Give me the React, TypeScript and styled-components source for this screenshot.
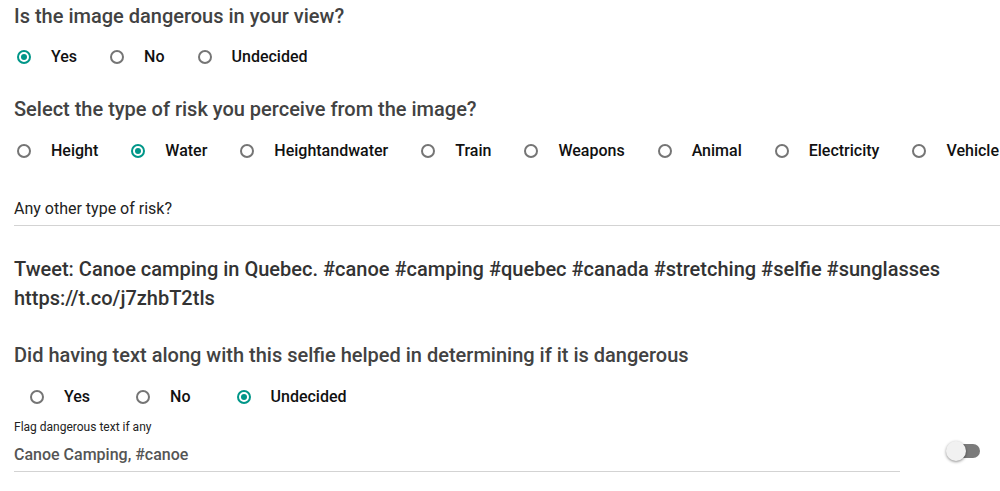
import React from "react";
import styled, { createGlobalStyle } from "styled-components";

const Global = createGlobalStyle`
  html, body { margin: 0; padding: 0; background: #fff; }
  body { font-family: Roboto, "Noto Sans", Arial, sans-serif; overflow: hidden; }
`;

const Page = styled.div`
  padding-left: 14px;
  padding-top: 1px;
  width: 986px;
`;

const Heading = styled.div<{ $mt: number }>`
  margin-top: ${(p) => p.$mt}px;
  font-size: 20px;
  font-weight: 500;
  line-height: 30px;
  color: #424242;
  white-space: nowrap;
`;

const RadioRow = styled.div<{ $mt: number; $indent?: number; $gap?: number }>`
  display: flex;
  align-items: center;
  height: 30px;
  margin-top: ${(p) => p.$mt}px;
  padding-left: ${(p) => (p.$indent ?? 0) + 3}px;
  gap: ${(p) => p.$gap ?? 33}px;
  white-space: nowrap;
`;

const Option = styled.label`
  display: flex;
  align-items: center;
  gap: 20px;
  cursor: pointer;
`;

const Circle = styled.span<{ $on: boolean }>`
  box-sizing: border-box;
  width: 14px;
  height: 14px;
  border-radius: 50%;
  border: 2px solid ${(p) => (p.$on ? "#009688" : "#757575")};
  display: flex;
  align-items: center;
  justify-content: center;
  &::after {
    content: "";
    width: 6px;
    height: 6px;
    border-radius: 50%;
    background: ${(p) => (p.$on ? "#009688" : "transparent")};
  }
`;

const OptionText = styled.span`
  font-size: 16px;
  font-weight: 500;
  color: #111;
  line-height: 20px;
`;

const Field = styled.div<{ $mt: number }>`
  margin-top: ${(p) => p.$mt}px;
  border-bottom: 1px solid #d3d3d3;
  padding-bottom: 6px;
`;

const FieldPlaceholder = styled.div`
  font-size: 16px;
  line-height: 21px;
  color: #222;
`;

const Tweet = styled.div`
  margin-top: 29px;
  font-size: 20px;
  font-weight: 500;
  line-height: 29px;
  color: #333;
`;

const FlagRow = styled.div`
  display: flex;
  align-items: flex-end;
  margin-top: 7px;
`;

const FlagField = styled.div`
  width: 886px;
  border-bottom: 1px solid #d3d3d3;
  padding-bottom: 5px;
`;

const SmallLabel = styled.div`
  font-size: 12px;
  line-height: 16px;
  color: #222;
`;

const FieldValue = styled.div`
  margin-top: 9px;
  font-size: 16px;
  font-weight: 500;
  line-height: 22px;
  color: #555;
`;

const Toggle = styled.div`
  position: relative;
  margin-left: 44px;
  margin-bottom: 11px;
  width: 36px;
  height: 20px;
`;

const Track = styled.div`
  position: absolute;
  left: 10px;
  top: 3px;
  width: 26px;
  height: 14px;
  border-radius: 7px;
  background: #7b7b7b;
`;

const Thumb = styled.div`
  position: absolute;
  left: 2px;
  top: 0;
  width: 20px;
  height: 20px;
  border-radius: 50%;
  background: #f1f1f1;
  box-shadow: 0 1px 3px rgba(0, 0, 0, 0.45);
`;

type Opt = { label: string; on?: boolean };

const Radios = ({ opts, mt, indent, gap }: { opts: Opt[]; mt: number; indent?: number; gap?: number }) => (
  <RadioRow $mt={mt} $indent={indent} $gap={gap}>
    {opts.map((o) => (
      <Option key={o.label}>
        <Circle $on={!!o.on} />
        <OptionText>{o.label}</OptionText>
      </Option>
    ))}
  </RadioRow>
);

export default function App() {
  return (
    <>
      <Global />
      <Page>
        <Heading $mt={0}>Is the image dangerous in your view?</Heading>
        <Radios mt={11} opts={[{ label: "Yes", on: true }, { label: "No" }, { label: "Undecided" }]} />
        <Heading $mt={22}>Select the type of risk you perceive from the image?</Heading>
        <Radios
          mt={12}
          opts={[
            { label: "Height" },
            { label: "Water", on: true },
            { label: "Heightandwater" },
            { label: "Train" },
            { label: "Weapons" },
            { label: "Animal" },
            { label: "Electricity" },
            { label: "Vehicle" },
          ]}
        />
        <Field $mt={32}>
          <FieldPlaceholder>Any other type of risk?</FieldPlaceholder>
        </Field>
        <Tweet>
          Tweet: Canoe camping in Quebec. #canoe #camping #quebec #canada #stretching #selfie #sunglasses
          <br />
          https://t.co/j7zhbT2tls
        </Tweet>
        <Heading $mt={27}>Did having text along with this selfie helped in determining if it is dangerous</Heading>
        <Radios
          mt={12}
          indent={13}
          gap={46}
          opts={[{ label: "Yes" }, { label: "No" }, { label: "Undecided", on: true }]}
        />
        <FlagRow>
          <FlagField>
            <SmallLabel>Flag dangerous text if any</SmallLabel>
            <FieldValue>Canoe Camping, #canoe</FieldValue>
          </FlagField>
          <Toggle>
            <Track />
            <Thumb />
          </Toggle>
        </FlagRow>
      </Page>
    </>
  );
}
